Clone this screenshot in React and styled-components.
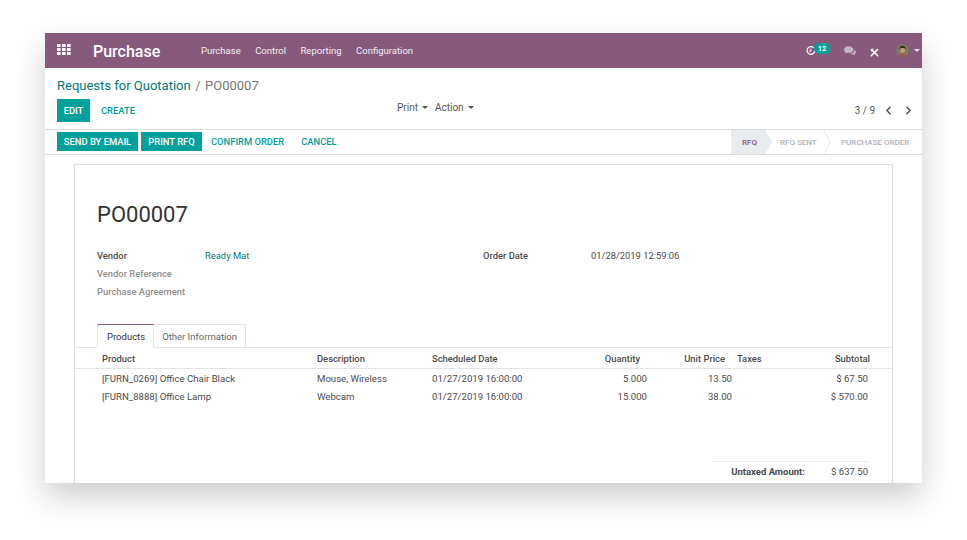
import React from "react";
import styled, { createGlobalStyle } from "styled-components";
import { ChevronLeft, ChevronRight } from "lucide-react";

const GlobalStyle = createGlobalStyle`
  html, body {
    margin: 0;
    padding: 0;
    background: #fff;
  }
  body {
    font-family: Roboto, "Liberation Sans", sans-serif;
    overflow: hidden;
  }
`;

const menuItems = ["Purchase", "Control", "Reporting", "Configuration"];

const products = [
  {
    name: "[FURN_0269] Office Chair Black",
    description: "Mouse, Wireless",
    date: "01/27/2019 16:00:00",
    quantity: "5.000",
    price: "13.50",
    subtotal: "$ 67.50",
  },
  {
    name: "[FURN_8888] Office Lamp",
    description: "Webcam",
    date: "01/27/2019 16:00:00",
    quantity: "15.000",
    price: "38.00",
    subtotal: "$ 570.00",
  },
];

const App = () => {
  return (
    <Page>
      <GlobalStyle />
      <Window>
        <Navbar>
          <AppsIcon viewBox="0 0 14 12">
            {[0, 5, 10].map((x) =>
              [0, 4, 8].map((y) => (
                <rect key={`${x}-${y}`} x={x} y={y} width="3.6" height="3" fill="#fff" />
              ))
            )}
          </AppsIcon>
          <Brand>Purchase</Brand>
          <Menu>
            {menuItems.map((item) => (
              <MenuItem key={item}>{item}</MenuItem>
            ))}
          </Menu>
          <Systray>
            <Activity>
              <svg width="10" height="10" viewBox="0 0 13 13" fill="none" stroke="#fff" strokeWidth="1.6">
                <path d="M9.900 2.200A5 5 0 1 0 11.400 6" />
                <path d="M6.300 3.600v3.200H4.200" strokeWidth="1.300" />
              </svg>
              <Badge>12</Badge>
            </Activity>
            <ChatIcon viewBox="0 0 14 11">
              <path d="M5.500 0C2.500 0 0 1.700 0 3.900c0 1.200.8 2.300 2 3L1.400 8.600l2.300-1.100c.6.1 1.200.2 1.800.2 3 0 5.500-1.700 5.500-3.800S8.500 0 5.500 0z" fill="#c9b5c2" />
              <path d="M12 4.500c0 2.300-2.300 4-5 4.200.8.600 1.900.900 3 .900.400 0 .800 0 1.200-.100l1.600.900-.400-1.500c1-.600 1.600-1.500 1.600-2.500 0-.900-.800-1.700-2-1.900z" fill="#c9b5c2" />
            </ChatIcon>
            <ToolsIcon viewBox="0 0 12 12">
              <path d="M3 3 11 11" stroke="#fff" strokeWidth="2" />
              <path d="M10.500 1.500 1 11" stroke="#fff" strokeWidth="2" />
              <path d="M.4 2.800 2.800.4 5 2.600 2.600 5z" fill="#fff" />
            </ToolsIcon>
            <Avatar viewBox="0 0 14 14">
              <circle cx="7" cy="7" r="7" fill="#7d7a5e" />
              <path d="M3.500 6c0-3 1.500-4 3.500-4s3.500 1 3.500 4l-1-1.500h-5z" fill="#3d2c22" />
              <circle cx="7" cy="7" r="2.600" fill="#c99a78" />
              <path d="M2.500 14c.5-3 2.500-4 4.500-4s4 1 4.500 4z" fill="#a05c4c" />
            </Avatar>
            <Caret $color="#e8dfe5" $gap={5} />
          </Systray>
        </Navbar>

        <ControlPanel>
          <Breadcrumb>
            <CrumbLink>Requests for Quotation</CrumbLink>
            <CrumbSep>/</CrumbSep>
            <CrumbCurrent>PO00007</CrumbCurrent>
          </Breadcrumb>
          <ControlRow>
            <ButtonGroup>
              <PrimaryButton $height={23} $width={33}>EDIT</PrimaryButton>
              <LinkButton $margin="0 0 0 11px">CREATE</LinkButton>
            </ButtonGroup>
            <Sidebar>
              <SidebarItem>Print<Caret $color="#555" $gap={4} /></SidebarItem>
              <SidebarItem>Action<Caret $color="#555" $gap={4} /></SidebarItem>
            </Sidebar>
            <Pager>
              <PagerText>3 / 9</PagerText>
              <ChevronLeft size={13} strokeWidth={3} color="#555" />
              <ChevronRight size={13} strokeWidth={3} color="#555" />
            </Pager>
          </ControlRow>
        </ControlPanel>

        <StatusBar>
          <StatusButtons>
            <PrimaryButton $height={19} $width={81}>SEND BY EMAIL</PrimaryButton>
            <PrimaryButton $height={19} $width={61} $margin="0 0 0 3px">PRINT RFQ</PrimaryButton>
            <LinkButton $margin="0 0 0 9px">CONFIRM ORDER</LinkButton>
            <LinkButton $margin="0 0 0 17px">CANCEL</LinkButton>
          </StatusButtons>
          <Steps>
            <Step $active $width={34} $pad={11}>RFQ</Step>
            <Step $width={59} $pad={15}>RFQ SENT</Step>
            <Step $width={98} $pad={17} $last>PURCHASE ORDER</Step>
          </Steps>
        </StatusBar>

        <FormArea>
          <Sheet>
            <OrderTitle>PO00007</OrderTitle>
            <Fields>
              <FieldColumn>
                <FieldRow>
                  <FieldLabel>Vendor</FieldLabel>
                  <FieldLink>Ready Mat</FieldLink>
                </FieldRow>
                <FieldRow>
                  <FieldLabel $muted>Vendor Reference</FieldLabel>
                </FieldRow>
                <FieldRow>
                  <FieldLabel $muted>Purchase Agreement</FieldLabel>
                </FieldRow>
              </FieldColumn>
              <FieldColumn>
                <FieldRow>
                  <FieldLabel>Order Date</FieldLabel>
                  <FieldValue>01/28/2019 12:59:06</FieldValue>
                </FieldRow>
              </FieldColumn>
            </Fields>
            <Tabs>
              <Tab $active>Products</Tab>
              <Tab>Other Information</Tab>
            </Tabs>
            <HeaderRow>
              <span>Product</span>
              <span>Description</span>
              <span>Scheduled Date</span>
              <HeaderNumber>Quantity</HeaderNumber>
              <HeaderNumber>Unit Price</HeaderNumber>
              <TaxesCell>Taxes</TaxesCell>
              <HeaderNumber $flush>Subtotal</HeaderNumber>
            </HeaderRow>
            {products.map((row) => (
              <BodyRow key={row.name}>
                <span>{row.name}</span>
                <span>{row.description}</span>
                <span>{row.date}</span>
                <Amount>{row.quantity}</Amount>
                <Amount>{row.price}</Amount>
                <TaxesCell />
                <Amount $inset>{row.subtotal}</Amount>
              </BodyRow>
            ))}
            <Totals>
              <TotalLabel>Untaxed Amount:</TotalLabel>
              <TotalValue>$ 637.50</TotalValue>
            </Totals>
          </Sheet>
        </FormArea>
      </Window>
    </Page>
  );
};

export default App;

const Page = styled.div`
  width: 967px;
  height: 540px;
  padding: 33px 45px 0;
  box-sizing: border-box;
  background: #fff;
`;

const Window = styled.div`
  width: 877px;
  height: 450px;
  background: #fff;
  overflow: hidden;
  display: flex;
  flex-direction: column;
  box-shadow: 0 14px 30px rgba(0, 0, 0, 0.2);
`;

const Navbar = styled.header`
  height: 35px;
  flex: none;
  box-sizing: border-box;
  padding: 1px 0 0 12px;
  background: #875a7b;
  display: flex;
  align-items: center;
  color: #fff;
`;

const AppsIcon = styled.svg`
  width: 14px;
  height: 12px;
  margin-top: -3px;
`;

const Brand = styled.div`
  font-size: 16px;
  font-weight: 500;
  margin-left: 22px;
  width: 108px;
`;

const Menu = styled.nav`
  display: flex;
  gap: 14.5px;
`;

const MenuItem = styled.span`
  font-size: 9.5px;
  color: #f3eef2;
  margin-top: -1px;
`;

const Systray = styled.div`
  margin-left: auto;
  display: flex;
  align-items: center;
  padding-right: 2px;
  margin-top: -1px;
`;

const Activity = styled.div`
  position: relative;
  width: 38px;
  height: 14px;
  display: flex;
  align-items: center;
`;

const Badge = styled.span`
  position: absolute;
  left: 8px;
  top: -1px;
  width: 16px;
  height: 11px;
  border-radius: 5px;
  background: #00a09d;
  font-size: 7.5px;
  font-weight: 700;
  line-height: 11px;
  text-align: center;
`;

const ChatIcon = styled.svg`
  width: 12px;
  height: 10px;
`;

const ToolsIcon = styled.svg`
  width: 9px;
  height: 9px;
  margin: 3px 0 0 14px;
`;

const Avatar = styled.svg`
  width: 13px;
  height: 13px;
  margin-left: 17px;
  border-radius: 50%;
`;

const Caret = styled.span`
  display: inline-block;
  width: 0;
  height: 0;
  margin-left: ${({ $gap }) => $gap}px;
  border-left: 3px solid transparent;
  border-right: 3px solid transparent;
  border-top: 3px solid ${({ $color }) => $color};
`;

const ControlPanel = styled.div`
  height: 61px;
  flex: none;
  box-sizing: border-box;
  padding: 9px 12px 0;
  display: flex;
  flex-direction: column;
`;

const Breadcrumb = styled.div`
  font-size: 13px;
  line-height: 17px;
  display: flex;
`;

const CrumbLink = styled.span`
  color: #00787a;
`;

const CrumbSep = styled.span`
  color: #777;
  margin: 0 4.5px;
`;

const CrumbCurrent = styled.span`
  color: #777;
`;

const ControlRow = styled.div`
  display: grid;
  grid-template-columns: 340px 1fr auto;
  margin-top: 5px;
`;

const ButtonGroup = styled.div`
  display: flex;
  align-items: center;
`;

const StatusButtons = styled(ButtonGroup)`
  padding-bottom: 2px;
`;

const PrimaryButton = styled.button`
  width: ${({ $width }) => $width}px;
  height: ${({ $height }) => $height}px;
  margin: ${({ $margin }) => $margin || 0};
  padding: 0;
  border: none;
  background: #00a09d;
  color: #fff;
  font-family: inherit;
  font-size: 9.4px;
  font-weight: 500;
  white-space: nowrap;
`;

const LinkButton = styled.button`
  margin: ${({ $margin }) => $margin || 0};
  padding: 0;
  border: none;
  background: none;
  color: #00a09d;
  font-family: inherit;
  font-size: 9.4px;
  font-weight: 500;
  white-space: nowrap;
`;

const Sidebar = styled.div`
  display: flex;
  gap: 7px;
  height: 16px;
`;

const SidebarItem = styled.span`
  font-size: 10px;
  color: #555;
  line-height: 15px;
  display: flex;
  align-items: center;
`;

const Pager = styled.div`
  display: flex;
  align-items: center;
  gap: 7px;
  margin-right: -5px;
`;

const PagerText = styled.span`
  font-size: 10px;
  color: #555;
`;

const StatusBar = styled.div`
  height: 26px;
  flex: none;
  box-sizing: border-box;
  border-top: 1px solid #dcdcdc;
  border-bottom: 1px solid #dcdcdc;
  display: flex;
  justify-content: space-between;
  padding-left: 12px;
`;

const Steps = styled.div`
  display: flex;
`;

const Step = styled.div`
  position: relative;
  box-sizing: border-box;
  width: ${({ $width }) => $width}px;
  padding-left: ${({ $pad }) => $pad}px;
  display: flex;
  align-items: center;
  font-size: 8px;
  font-weight: 500;
  white-space: nowrap;
  color: ${({ $active }) => ($active ? "#875a7b" : "#b0b4ba")};
  background: ${({ $active }) => ($active ? "#e9ecef" : "transparent")};

  &::after,
  &::before {
    content: "";
    position: absolute;
    top: 0;
    width: 0;
    height: 0;
    display: ${({ $last }) => ($last ? "none" : "block")};
    border-top: 12px solid transparent;
    border-bottom: 12px solid transparent;
  }

  &::after {
    left: 100%;
    border-left: 7px solid ${({ $active }) => ($active ? "#e9ecef" : "#e4e6e9")};
  }

  &::before {
    z-index: 1;
    left: calc(100% - 1px);
    border-left: 7px solid ${({ $active }) => ($active ? "#e9ecef" : "#fff")};
    transform: translateX(${({ $active }) => ($active ? "1px" : "0")});
  }
`;

const FormArea = styled.div`
  flex: 1;
  padding: 9px 29px 0;
  min-height: 0;
`;

const Sheet = styled.div`
  width: 819px;
  box-sizing: border-box;
  height: 340px;
  border: 1px solid #dcdfe2;
  padding-top: 36px;
`;

const OrderTitle = styled.h1`
  margin: 0 0 0 22px;
  font-size: 22px;
  font-weight: 400;
  line-height: 27px;
  color: #333;
`;

const Fields = styled.div`
  display: grid;
  grid-template-columns: 386px 1fr;
  margin: 18px 0 0 22px;
`;

const FieldColumn = styled.div`
  display: flex;
  flex-direction: column;
`;

const FieldRow = styled.div`
  display: flex;
  height: 18px;
  align-items: center;
  font-size: 9.4px;
`;

const FieldLabel = styled.span`
  width: 108px;
  font-weight: 500;
  color: ${({ $muted }) => ($muted ? "#8f8f8f" : "#4c4c4c")};
`;

const FieldLink = styled.span`
  color: #00787a;
`;

const FieldValue = styled.span`
  color: #4c4c4c;
`;

const Tabs = styled.div`
  display: flex;
  margin: 24px 0 0 22px;
  height: 23px;
`;

const Tab = styled.div`
  box-sizing: border-box;
  height: 24px;
  padding: 0 8px 0 ${({ $active }) => ($active ? "9px" : "8px")};
  line-height: 23px;
  font-size: 9.5px;
  color: ${({ $active }) => ($active ? "#333" : "#666")};
  background: #fff;
  border: 1px solid #e2e4e6;
  border-top-color: ${({ $active }) => ($active ? "#875a7b" : "#e2e4e6")};
  border-bottom-color: ${({ $active }) => ($active ? "#fff" : "#e2e4e6")};
  border-left-width: ${({ $active }) => ($active ? "1px" : "0")};
  position: relative;
`;

const HeaderRow = styled.div`
  display: grid;
  grid-template-columns: 215px 115px 100px 115px 85px 38px 100px;
  height: 22px;
  align-items: center;
  box-sizing: border-box;
  padding-left: 27px;
  border-top: 1px solid #e2e4e6;
  border-bottom: 1px solid #e2e4e6;
  font-size: 9.4px;
  font-weight: 500;
  color: #4c4c4c;
`;

const HeaderNumber = styled.span`
  text-align: right;
  padding-right: ${({ $flush }) => ($flush ? "0" : "7px")};
  white-space: nowrap;
`;

const TaxesCell = styled.span`
  padding-left: 5px;
`;

const BodyRow = styled.div`
  display: grid;
  grid-template-columns: 215px 115px 100px 115px 85px 38px 100px;
  height: 18px;
  align-items: center;
  padding-left: 27px;
  font-size: 9.6px;
  color: #4c4c4c;
`;

const Amount = styled.span`
  text-align: right;
  white-space: nowrap;
  padding-right: ${({ $inset }) => ($inset ? "2px" : "0")};
`;

const Totals = styled.div`
  margin: 56px 23px 0 auto;
  width: 157px;
  box-sizing: border-box;
  border-top: 1px solid #e8ecec;
  padding-right: 1px;
  height: 20px;
  display: flex;
  align-items: center;
  font-size: 9.5px;
  color: #4c4c4c;
`;

const TotalLabel = styled.span`
  width: 93px;
  text-align: right;
  font-weight: 700;
`;

const TotalValue = styled.span`
  margin-left: auto;
`;
